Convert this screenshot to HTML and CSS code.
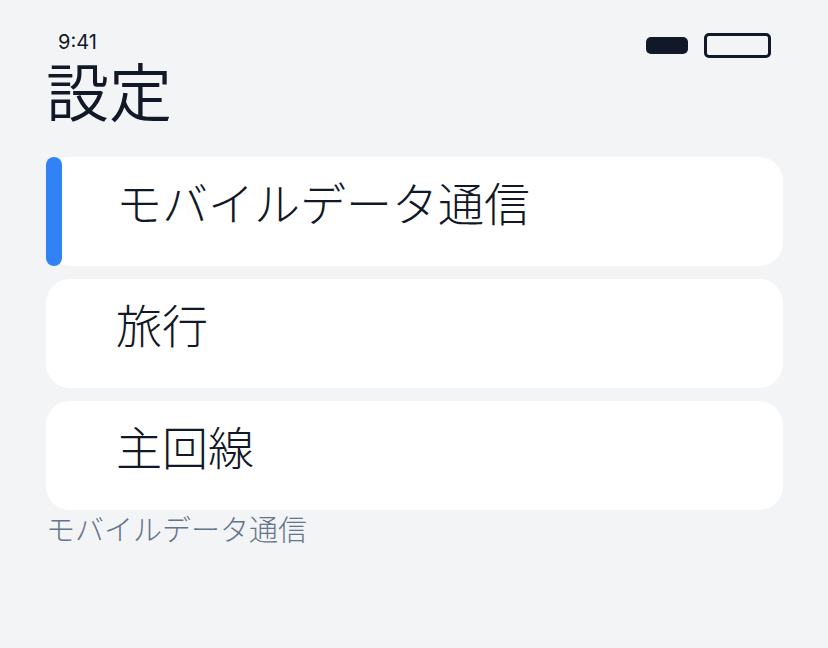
FILE: index.html
```html
<!DOCTYPE html>
<html lang="ja">
<head>
    <meta charset="UTF-8">
    <meta name="viewport" content="width=device-width, initial-scale=1.0">
    <title>設定</title>
    <link rel="stylesheet" href="styles.css">
</head>
<body>
    <div class="screen">
        <div class="status-bar">
            <span class="clock">9:41</span>
            <div class="status-icons">
                <div class="signal"></div>
                <div class="battery"></div>
            </div>
        </div>

        <h1 class="title">設定</h1>

        <div class="menu">
            <div class="menu-item active">
                <span class="menu-label">モバイルデータ通信</span>
            </div>
            <div class="menu-item">
                <span class="menu-label">旅行</span>
            </div>
            <div class="menu-item">
                <span class="menu-label">主回線</span>
            </div>
        </div>

        <div class="caption">モバイルデータ通信</div>
    </div>
</body>
</html>
```

FILE: styles.css
```css
* {
    margin: 0;
    padding: 0;
    box-sizing: border-box;
}

body {
    background: #f3f4f6;
    color: #111827;
    font-family: 'Noto Sans CJK JP', 'Noto Sans', sans-serif;
    width: 828px;
    height: 648px;
    overflow: hidden;
}

.screen {
    padding: 0 45px 0 46px;
}

.status-bar {
    display: flex;
    justify-content: space-between;
    align-items: flex-start;
    height: 57px;
    padding: 33px 12px 0 12px;
}

.clock {
    font-family: 'Inter', 'Roboto', sans-serif;
    font-size: 20px;
    line-height: 1;
    color: #111827;
    margin-top: -1px;
}

.status-icons {
    display: flex;
    align-items: center;
    gap: 16px;
}

.signal {
    width: 42px;
    height: 17px;
    background: #111827;
    border-radius: 5px;
}

.battery {
    width: 67px;
    height: 25px;
    border: 3px solid #111827;
    border-radius: 5px;
}

.title {
    font-size: 63px;
    font-weight: 350;
    line-height: 1;
}

.menu {
    display: flex;
    flex-direction: column;
    gap: 13px;
    margin-top: 37px;
}

.menu-item {
    position: relative;
    height: 109px;
    background: #ffffff;
    border-radius: 24px;
    display: flex;
    align-items: center;
    padding: 0 0 22px 70px;
}

.menu-item.active::before {
    content: '';
    position: absolute;
    left: 0;
    top: 0;
    bottom: 0;
    width: 16px;
    background: #3182f6;
    border-radius: 8px;
}

.menu-label {
    font-size: 46px;
    font-weight: 300;
    line-height: 1;
}

.caption {
    margin-top: -3px;
    font-size: 29px;
    font-weight: 300;
    color: #64748b;
}
```
